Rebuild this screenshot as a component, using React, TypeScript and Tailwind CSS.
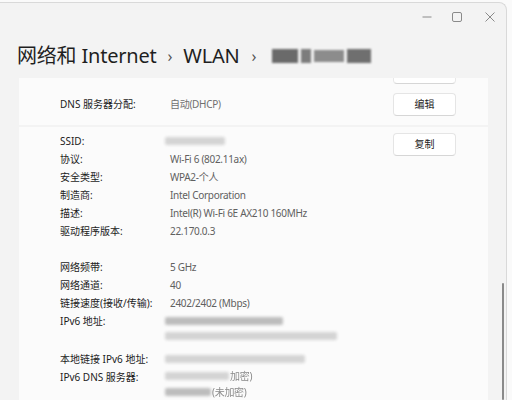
const font = { fontFamily: '"Noto Sans", "Noto Sans CJK SC", sans-serif' };

type Row = { label: string; value?: string };

const topRows: Row[] = [
  { label: 'SSID:' },
  { label: '协议:', value: 'Wi-Fi 6 (802.11ax)' },
  { label: '安全类型:', value: 'WPA2-个人' },
  { label: '制造商:', value: 'Intel Corporation' },
  { label: '描述:', value: 'Intel(R) Wi-Fi 6E AX210 160MHz' },
  { label: '驱动程序版本:', value: '22.170.0.3' },
];

function Blur({ w, dark }: { w: number; dark?: boolean }) {
  return (
    <div
      className={`h-[8px] rounded-[2px] blur-[1.5px] ${dark ? 'bg-[#bdbdbd]' : 'bg-[#d4d4d4]'}`}
      style={{ width: w }}
    />
  );
}

function InfoRow({ label, children, tall }: { label: string; children?: React.ReactNode; tall?: boolean }) {
  return (
    <div className={`flex ${tall ? '' : 'h-[18px]'}`}>
      <div className="w-[110px] h-[18px] flex items-center text-[#1b1b1b]">{label}</div>
      <div className="flex-1 text-[#606060] tracking-[-0.3px]">{children}</div>
    </div>
  );
}

function Btn({ children }: { children: React.ReactNode }) {
  return (
    <div className="w-[63px] h-[23px] bg-white border border-[#e5e5e5] border-b-[#d6d6d6] rounded-[4px] flex items-center justify-center text-[10px] text-[#1b1b1b]">
      {children}
    </div>
  );
}

export default function App() {
  return (
    <div className="w-[512px] h-[400px] overflow-hidden bg-[#fafafa] pt-[2px] pr-[5px]" style={font}>
      <div className="h-[398px] bg-[#f3f3f3] border-t border-r border-[#d9d9d9] rounded-tr-[8px] flex flex-col">
        {/* title bar */}
        <div className="h-[28px] flex items-center justify-end">
          <svg width="10" height="10" viewBox="0 0 10 10" className="mr-[20px]">
            <path d="M0.5 5h9" stroke="#8a8a8a" strokeWidth="1" />
          </svg>
          <svg width="10" height="10" viewBox="0 0 10 10" className="mr-[23px]">
            <rect x="0.5" y="0.5" width="9" height="9" rx="1.5" fill="none" stroke="#8a8a8a" strokeWidth="1" />
          </svg>
          <svg width="10" height="10" viewBox="0 0 10 10" className="mr-[11px]">
            <path d="M0.5 0.5l9 9M9.5 0.5l-9 9" stroke="#8a8a8a" strokeWidth="1" />
          </svg>
        </div>

        {/* heading */}
        <div className="h-[47px] pl-[17px] pt-[2px] flex items-center text-[20px] text-[#1f1f1f] tracking-[-0.2px]">
          <span>网络和 Internet</span>
          <span className="mx-[11px] text-[16px] text-[#555]">›</span>
          <span>WLAN</span>
          <span className="ml-[12px] mr-[16px] text-[16px] text-[#555]">›</span>
          <div className="flex gap-[3px] items-center blur-[1px]">
            <div className="w-[26px] h-[14px] bg-[#6a6a6a]" />
            <div className="w-[10px] h-[14px] bg-[#7c7c7c]" />
            <div className="w-[30px] h-[12px] bg-[#8c8c8c]" />
            <div className="w-[24px] h-[14px] bg-[#6f6f6f]" />
          </div>
        </div>

        {/* content */}
        <div className="flex flex-1 min-h-0 text-[10px]">
          <div className="ml-[19px] w-[469px] flex flex-col overflow-hidden">
            <div className="bg-[#fbfbfb] h-[49px] flex flex-col overflow-hidden">
              <div className="h-[6px] flex justify-end pr-[32px] overflow-hidden">
                <div className="-mt-[17px] w-[63px] h-[23px] bg-white border border-[#e8e8e8] border-b-[#d6d6d6] rounded-[4px]" />
              </div>
              <div className="flex-1 flex items-center pl-[41px] pr-[32px]">
                <div className="w-[110px] text-[#1b1b1b]">DNS 服务器分配:</div>
                <div className="flex-1 text-[#707070] tracking-[-0.3px]">自动(DHCP)</div>
                <Btn>编辑</Btn>
              </div>
            </div>
            <div className="h-[2px]" />
            <div className="bg-[#fbfbfb] flex-1 flex pl-[41px] pr-[32px] pt-[5px]">
              <div className="flex-1 flex flex-col">
                {topRows.map((r) => (
                  <InfoRow key={r.label} label={r.label}>
                    {r.value ? (
                      <div className="h-[18px] flex items-center">{r.value}</div>
                    ) : (
                      <div className="h-[18px] flex items-center -ml-[5px]">
                        <Blur w={60} />
                      </div>
                    )}
                  </InfoRow>
                ))}
                <div className="h-[18px]" />
                <InfoRow label="网络频带:">
                  <div className="h-[18px] flex items-center">5 GHz</div>
                </InfoRow>
                <InfoRow label="网络通道:">
                  <div className="h-[18px] flex items-center">40</div>
                </InfoRow>
                <InfoRow label="链接速度(接收/传输):">
                  <div className="h-[18px] flex items-center">2402/2402 (Mbps)</div>
                </InfoRow>
                <InfoRow label="IPv6 地址:" tall>
                  <div className="-ml-[5px] pt-[5px] flex flex-col gap-[7px]">
                    <Blur w={118} dark />
                    <Blur w={172} />
                  </div>
                </InfoRow>
                <div className="h-[10px]" />
                <InfoRow label="本地链接 IPv6 地址:">
                  <div className="h-[18px] flex items-center -ml-[5px]">
                    <Blur w={140} />
                  </div>
                </InfoRow>
                <InfoRow label="IPv6 DNS 服务器:" tall>
                  <div className="-ml-[5px] flex flex-col">
                    <div className="h-[16px] flex items-center gap-[1px]">
                      <Blur w={64} />
                      <span className="text-[#8a8a8a] blur-[0.4px]">加密)</span>
                    </div>
                    <div className="h-[16px] flex items-center gap-[1px]">
                      <Blur w={46} dark />
                      <span className="text-[#8a8a8a] blur-[0.4px]">(未加密)</span>
                    </div>
                  </div>
                </InfoRow>
              </div>
              <div className="pt-[1px]">
                <Btn>复制</Btn>
              </div>
            </div>
          </div>
          {/* scrollbar */}
          <div className="w-[18px] flex justify-end pr-[2px] pt-[205px]">
            <div className="w-[2px] h-full rounded-full bg-[#8a8a8a]" />
          </div>
        </div>
      </div>
    </div>
  );
}
